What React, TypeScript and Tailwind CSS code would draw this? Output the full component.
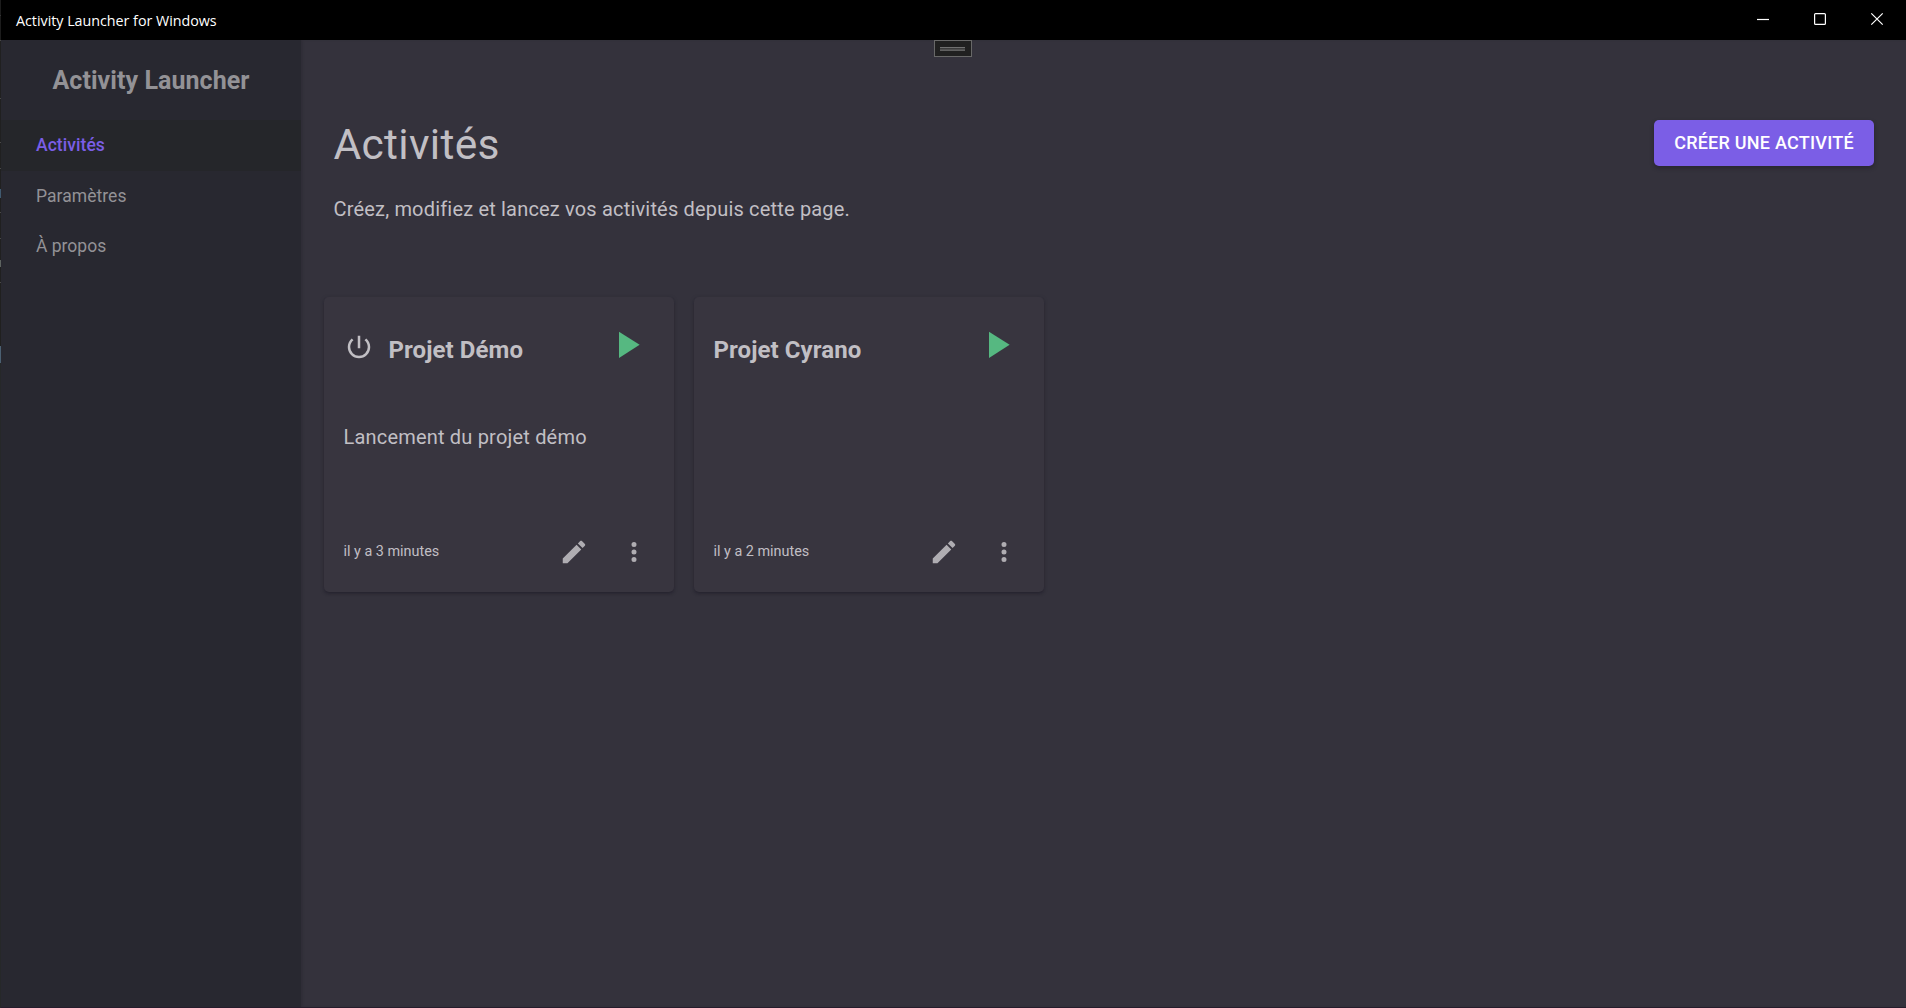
import React from "react";

const EDGE: [number, string][] = [
  [15, "#1c1c1c"], [1, "#343434"], [24, "#1c1c1c"], [1, "#484848"],
  [57, "#202020"], [1, "#484848"], [43, "#202020"], [1, "#484848"],
  [25, "#202020"], [1, "#484848"], [20, "#202020"], [9, "#405a70"],
  [14, "#202020"], [1, "#484848"], [25, "#202020"], [1, "#484848"],
  [21, "#202020"], [7, "#5d6360"], [15, "#202020"], [1, "#484848"],
  [63, "#20201f"], [17, "#4b6072"], [645, "#262829"],
];

function Icon({ d, className }: { d: string; className: string }) {
  return (
    <svg viewBox="0 0 24 24" fill="currentColor" className={className}>
      <path d={d} />
    </svg>
  );
}

const POWER =
  "M13,3H11V13H13V3M17.83,5.17L16.41,6.59C17.99,7.86 19,9.81 19,12A7,7 0 0,1 12,19A7,7 0 0,1 5,12C5,9.81 6.01,7.86 7.58,6.58L6.17,5.17C4.23,6.82 3,9.26 3,12A9,9 0 0,0 12,21A9,9 0 0,0 21,12C21,9.26 19.77,6.82 17.83,5.17Z";
const PLAY = "M8,5.14V19.14L19,12.14L8,5.14Z";
const PENCIL =
  "M20.71,7.04C21.1,6.65 21.1,6 20.71,5.63L18.37,3.29C18,2.9 17.35,2.9 16.96,3.29L15.12,5.12L18.87,8.87M3,17.25V21H6.75L17.81,9.93L14.06,6.18L3,17.25Z";
const DOTS =
  "M12,16A2,2 0 0,1 14,18A2,2 0 0,1 12,20A2,2 0 0,1 10,18A2,2 0 0,1 12,16M12,10A2,2 0 0,1 14,12A2,2 0 0,1 12,14A2,2 0 0,1 10,12A2,2 0 0,1 12,10M12,4A2,2 0 0,1 14,6A2,2 0 0,1 12,8A2,2 0 0,1 10,6A2,2 0 0,1 12,4Z";

function Card({ title, text, time, power }: { title: string; text?: string; time: string; power?: boolean }) {
  return (
    <article className="flex h-[295px] w-[350px] flex-col rounded-[5px] bg-[#38353f] px-[19.5px] text-[#c1bfc4] shadow-[0_2px_3px_-1px_rgba(20,17,30,0.4),0_1px_4px_rgba(20,17,30,0.22)]">
      <div className="flex h-[95px] items-start pt-[25px]">
        {power && <Icon d={POWER} className="mt-[10px] mr-[14.5px] ml-[0.5px] h-[30px] w-[30px]" />}
        <h2 className="mt-[8px] flex-1 text-[24px] leading-[40px] font-bold tracking-[0.08px] whitespace-nowrap">{title}</h2>
        <button className="-mt-[0.5px] mr-[5.5px]">
          <Icon d={PLAY} className="h-[45px] w-[45px] text-[#56b881]" />
        </button>
      </div>
      <p className="mt-[30px] h-[30px] text-[20px] leading-[30px] tracking-[0.19px]">{text}</p>
      <div className="mt-[73px] flex h-[54px] items-center">
        <span className="-mt-px flex-1 text-[14.4px]">{time}</span>
        <Icon d={PENCIL} className="mr-[30px] h-[30px] w-[30px] text-[#afadb2]" />
        <Icon d={DOTS} className="mr-[5.5px] h-[30px] w-[30px] text-[#afadb2]" />
      </div>
    </article>
  );
}

export default function App() {
  return (
    <div className="flex h-[1008px] w-[1906px] overflow-hidden bg-[#34323c] font-[Roboto,sans-serif]">
      <div className="flex w-px shrink-0 flex-col">
        {EDGE.map(([h, c], i) => (
          <div key={i} style={{ height: h, background: c }} />
        ))}
      </div>
      <div className="flex min-w-0 flex-1 flex-col border-b border-[#261c2c]">
        <header className="flex h-10 shrink-0 items-center bg-black text-white">
          <span className="ml-[15px] flex-1 pt-[2px] font-['Open_Sans','Noto_Sans',sans-serif] text-[14.3px] tracking-[-0.02px]">
            Activity Launcher for Windows
          </span>
          <svg viewBox="0 0 150 40" fill="none" stroke="white" strokeWidth="1.2" className="h-10 w-[150px]">
            <path d="M1 19.5H13" />
            <rect x="58.6" y="13.6" width="10.8" height="10.8" rx="1" />
            <path d="M115.3 13.3L126.7 24.7M126.7 13.3L115.3 24.7" />
          </svg>
        </header>
        <div className="flex min-h-0 flex-1">
          <aside className="w-[300px] shrink-0 bg-[#282830] text-[#939296]">
            <h1 className="flex h-20 items-center justify-center pt-[2px] text-[25px] font-bold tracking-[0.06px]">
              Activity Launcher
            </h1>
            <nav className="text-[17.5px]">
              <a className="flex h-[51px] items-center bg-[#25262a] pl-[35px] font-medium tracking-[0.06px] text-[#7b5ee6]">
                Activités
              </a>
              <a className="flex h-[50px] items-center pl-[35px] tracking-[0.05px]">Paramètres</a>
              <a className="flex h-[50px] items-center pl-[35px]">À propos</a>
            </nav>
          </aside>
          <main className="relative flex-1 shadow-[inset_2px_0_2px_rgba(30,28,36,0.15)]">
            <div className="absolute top-0 left-[633px] flex h-[17px] w-[38px] items-center justify-center border border-[#686868] bg-[#202020]">
              <div className="mr-px flex h-1 w-[25px] flex-col">
                <i className="h-px bg-[#717171]" />
                <i className="h-px bg-[#3c3c3c]" />
                <i className="h-px bg-[#505050]" />
                <i className="h-px bg-[#606060]" />
              </div>
            </div>
            <div className="flex items-start justify-between px-[32px] pt-20 text-[#c1bfc4]">
              <div>
                <h2 className="pl-[0.5px] text-[42.5px] leading-[50px] tracking-[0.31px]">Activités</h2>
                <p className="mt-[24px] pl-[0.5px] text-[20px] leading-[30px] tracking-[0.18px]">
                  Créez, modifiez et lancez vos activités depuis cette page.
                </p>
              </div>
              <button className="h-[46px] w-[220px] rounded-[5px] bg-[#7b5ee6] pb-[2px] text-[18px] font-medium tracking-[0.24px] whitespace-nowrap text-white shadow-[0_2px_4px_rgba(20,17,30,0.4)]">
                CRÉER UNE ACTIVITÉ
              </button>
            </div>
            <div className="mt-[73px] flex gap-5 pl-[23px]">
              <Card title="Projet Démo" text="Lancement du projet démo" time="il y a 3 minutes" power />
              <Card title="Projet Cyrano" time="il y a 2 minutes" />
            </div>
          </main>
        </div>
      </div>
    </div>
  );
}
